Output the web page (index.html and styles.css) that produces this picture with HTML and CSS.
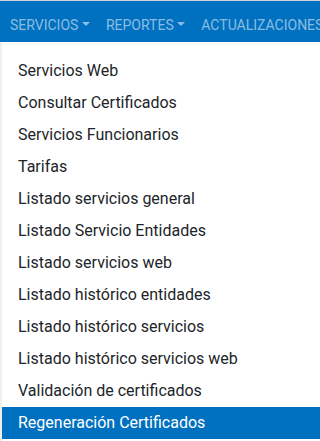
FILE: index.html
```html
<!DOCTYPE html>
<html lang="es">
<head>
<meta charset="utf-8">
<link rel="stylesheet" href="styles.css">
</head>
<body>
<div class="topline"></div>
<nav class="navbar">
  <a class="nav-link dropdown-toggle">SERVICIOS</a>
  <a class="nav-link dropdown-toggle">REPORTES</a>
  <a class="nav-link">ACTUALIZACIONES</a>
</nav>
<div class="dropdown-menu">
  <a class="dropdown-item">Servicios Web</a>
  <a class="dropdown-item">Consultar Certificados</a>
  <a class="dropdown-item">Servicios Funcionarios</a>
  <a class="dropdown-item">Tarifas</a>
  <a class="dropdown-item">Listado servicios general</a>
  <a class="dropdown-item">Listado Servicio Entidades</a>
  <a class="dropdown-item">Listado servicios web</a>
  <a class="dropdown-item">Listado histórico entidades</a>
  <a class="dropdown-item">Listado histórico servicios</a>
  <a class="dropdown-item">Listado histórico servicios web</a>
  <a class="dropdown-item">Validación de certificados</a>
  <a class="dropdown-item active">Regeneración Certificados</a>
</div>
</body>
</html>
```
FILE: styles.css
```css
html, body {
  margin: 0;
  padding: 0;
}
html {
  background: #eef0ee;
}
body {
  height: 441px;
  overflow: hidden;
  position: relative;
  font-family: Roboto, "Liberation Sans", sans-serif;
}
.topline {
  height: 1px;
  background: #cfd3d6;
}
.navbar {
  height: 41px;
  box-sizing: border-box;
  background: #0070c0;
  display: flex;
  padding: 14px 0 0 2px;
  white-space: nowrap;
  overflow: hidden;
}
.nav-link {
  font-size: 14px;
  line-height: 21px;
  color: rgba(255, 255, 255, 0.55);
  padding: 0 8px;
  flex: none;
}
.dropdown-toggle::after {
  content: "";
  display: inline-block;
  margin-left: 3.6px;
  vertical-align: 3.6px;
  border-top: 4.2px solid;
  border-right: 4.2px solid transparent;
  border-left: 4.2px solid transparent;
  border-bottom: 0;
}
.dropdown-menu {
  position: absolute;
  top: 42px;
  left: 2px;
  right: 0;
  min-width: 258px;
  height: 420px;
  background: #fff;
  padding-top: 13px;
  box-sizing: border-box;
}
.dropdown-item {
  display: block;
  padding: 4px 16px;
  font-size: 16px;
  line-height: 24px;
  color: #212529;
  white-space: nowrap;
}
.dropdown-item.active {
  background: #0070c0;
  color: #fff;
}
```
